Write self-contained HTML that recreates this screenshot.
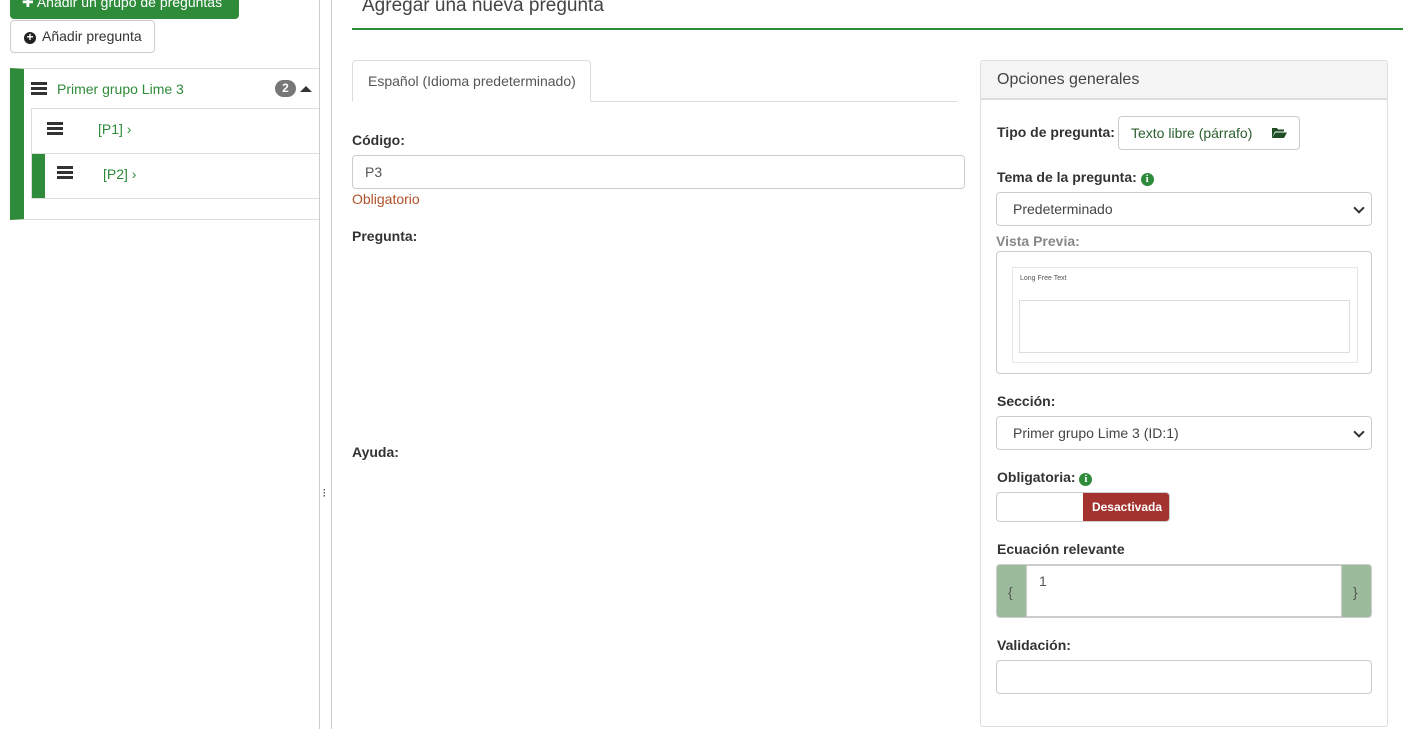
<!DOCTYPE html>
<html><head><meta charset="utf-8"><style>
*{box-sizing:border-box}
body{margin:0;width:1408px;height:729px;position:relative;overflow:hidden;background:#fff;font-family:"Liberation Sans",Arial,sans-serif;font-size:14px;color:#333}
.abs{position:absolute}
.lbl{font-weight:bold;color:#333;font-size:14px}
.inp{border:1px solid #ccc;border-radius:4px;background:#fff}
.green{color:#2e8b3a}
.ham{width:16px;height:13px;border-top:3px solid #333;border-bottom:3px solid #333;position:absolute}
.ham:after{content:"";position:absolute;left:0;right:0;top:2px;border-top:3px solid #333}
.sel:after{content:"";position:absolute;right:8px;top:11px;width:6px;height:6px;border-right:2px solid #333;border-bottom:2px solid #333;transform:rotate(45deg)}
.info{display:inline-block;width:13px;height:13px;border-radius:50%;background:#2e8b3a;color:#fff;font-size:11px;font-weight:bold;text-align:center;line-height:13px;vertical-align:0px;font-family:"Liberation Serif",serif}
</style></head><body>
<div class="abs" style="left:10px;top:-12px;width:229px;height:31px;background:#2e8b3a;border-radius:0 0 4px 4px;color:#fff;font-size:14px;padding:6px 0 0 12px">✚ Añadir un grupo de preguntas</div>
<div class="abs inp" style="left:10px;top:20px;width:145px;height:33px;color:#333;padding:7px 0 0 13px;font-size:14px"><span style="display:inline-block;width:12px;height:12px;border-radius:50%;background:#222;color:#fff;font-size:12px;line-height:11px;text-align:center;font-weight:bold;margin-right:6px">+</span>Añadir pregunta</div>
<div class="abs" style="left:10px;top:68px;width:310px;height:152px;border:1px solid #ddd;border-left:14px solid #2e8b3a"></div>
<div class="ham" style="left:31px;top:82px"></div>
<div class="abs green" style="left:57px;top:81px;font-size:14px">Primer grupo Lime 3</div>
<div class="abs" style="left:275px;top:80px;width:21px;height:17px;border-radius:9px;background:#777;color:#fff;font-size:12px;font-weight:bold;text-align:center;line-height:17px">2</div>
<div class="abs" style="left:300px;top:86px;width:0;height:0;border-left:6px solid transparent;border-right:6px solid transparent;border-bottom:6px solid #333"></div>
<div class="abs" style="left:31px;top:108px;width:289px;height:91px;border:1px solid #ddd;border-right:none"></div>
<div class="abs" style="left:31px;top:153px;width:289px;height:1px;background:#ddd"></div>
<div class="ham" style="left:47px;top:122px"></div>
<div class="abs green" style="left:98px;top:121px">[P1] ›</div>
<div class="abs" style="left:32px;top:154px;width:13px;height:44px;background:#2e8b3a"></div>
<div class="ham" style="left:57px;top:166px"></div>
<div class="abs green" style="left:103px;top:166px">[P2] ›</div>
<div class="abs" style="left:319px;top:0;width:1px;height:729px;background:#ccc"></div>
<div class="abs" style="left:331px;top:0;width:1px;height:729px;background:#ccc"></div>
<div class="abs" style="left:323px;top:489px;font-size:9px;line-height:3px;font-weight:bold">·<br>·<br>·</div>
<div class="abs" style="left:362px;top:-5px;font-size:19px;color:#444">Agregar una nueva pregunta</div>
<div class="abs" style="left:352px;top:28px;width:1051px;height:2px;background:#2e8b3a"></div>
<div class="abs" style="left:352px;top:101px;width:605px;height:1px;background:#ddd"></div>
<div class="abs" style="left:352px;top:60px;width:239px;height:42px;border:1px solid #ddd;border-bottom:1px solid #fff;border-radius:4px 4px 0 0;background:#fff;padding:12px 0 0 15px;color:#555">Español (Idioma predeterminado)</div>
<div class="abs lbl" style="left:352px;top:132px">Código:</div>
<div class="abs inp" style="left:352px;top:155px;width:613px;height:34px;padding:8px 12px;color:#555">P3</div>
<div class="abs" style="left:352px;top:191px;color:#b0512a">Obligatorio</div>
<div class="abs lbl" style="left:352px;top:228px">Pregunta:</div>
<div class="abs lbl" style="left:352px;top:444px">Ayuda:</div>
<div class="abs" style="left:980px;top:60px;width:408px;height:667px;border:1px solid #ddd;border-radius:3px"></div>
<div class="abs" style="left:981px;top:61px;width:406px;height:39px;background:#f5f5f5;border-bottom:2px solid #ddd;padding:10px 0 0 16px;font-size:16px;color:#444">Opciones generales</div>
<div class="abs lbl" style="left:997px;top:124px">Tipo de pregunta:</div>
<div class="abs inp" style="left:1118px;top:116px;width:182px;height:34px;padding:8px 0 0 12px;color:#2b5e2f">Texto libre (párrafo)
<svg style="position:absolute;left:153px;top:10px" width="15" height="12" viewBox="0 0 15 12"><path d="M0 1h5l1 1.5h6v2H3L0 11z M3.5 5.5H15L12 11H0z" fill="#1f4d24"/></svg></div>
<div class="abs lbl" style="left:997px;top:169px">Tema de la pregunta: <span class="info">i</span></div>
<div class="abs inp sel" style="left:996px;top:192px;width:376px;height:34px;padding:8px 16px;color:#444">Predeterminado</div>
<div class="abs lbl" style="left:996px;top:233px;color:#888">Vista Previa:</div>
<div class="abs inp" style="left:996px;top:251px;width:376px;height:123px"></div>
<div class="abs" style="left:1012px;top:267px;width:346px;height:96px;border:1px solid #e6e6e6"></div>
<div class="abs" style="left:1020px;top:275px;font-size:7px;color:#555">Long Free Text</div>
<div class="abs" style="left:1019px;top:300px;width:331px;height:53px;border:1px solid #ddd"></div>
<div class="abs lbl" style="left:997px;top:393px">Sección:</div>
<div class="abs inp sel" style="left:996px;top:416px;width:376px;height:34px;padding:8px 16px;color:#444">Primer grupo Lime 3 (ID:1)</div>
<div class="abs lbl" style="left:997px;top:469px">Obligatoria: <span class="info">i</span></div>
<div class="abs inp" style="left:996px;top:492px;width:174px;height:30px;overflow:hidden"><div style="position:absolute;left:86px;top:-1px;width:88px;height:30px;background:#a3332f;color:#fff;font-size:12px;font-weight:bold;text-align:center;line-height:30px">Desactivada</div></div>
<div class="abs lbl" style="left:997px;top:541px">Ecuación relevante</div>
<div class="abs" style="left:996px;top:564px;width:376px;height:54px;border:1px solid #ccc;border-radius:4px;background:#9bbb9c"></div>
<div class="abs" style="left:1026px;top:565px;width:316px;height:52px;background:#fff;border:1px solid #ccc;padding:7px 12px;color:#555">1</div>
<div class="abs" style="left:1008px;top:584px;color:#555">{</div>
<div class="abs" style="left:1353px;top:584px;color:#555">}</div>
<div class="abs lbl" style="left:997px;top:637px">Validación:</div>
<div class="abs inp" style="left:996px;top:660px;width:376px;height:34px"></div>
</body></html>
